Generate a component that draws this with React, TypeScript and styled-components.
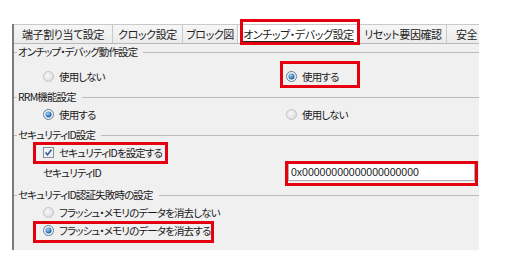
import styled, { createGlobalStyle } from "styled-components";

const GlobalStyle = createGlobalStyle`
  body {
    margin: 0;
    background: #ffffff;
    font-family: "Noto Sans CJK JP", "Noto Sans", sans-serif;
    font-feature-settings: "palt";
    font-size: 10.5px;
    letter-spacing: -0.85px;
    color: #1a1a1a;
  }
`;

const tabs = [
  { label: "端子割り当て設定", width: 99 },
  { label: "クロック設定", width: 70 },
  { label: "ブロック図", width: 55 },
  { label: "オンチップ・デバッグ設定", width: 122, active: true },
  { label: "リセット要因確認", width: 87 },
  { label: "安全", width: 32, cut: true },
];

const Radio = ({ checked }: { checked?: boolean }) => (
  <svg width="11" height="11" viewBox="0 0 11 11">
    <defs>
      <radialGradient id="rOff" cx="0.4" cy="0.4" r="0.7">
        <stop offset="0" stopColor="#f6f6f6" />
        <stop offset="1" stopColor="#dadada" />
      </radialGradient>
      <radialGradient id="rDot" cx="0.4" cy="0.35" r="0.7">
        <stop offset="0" stopColor="#a9d6f3" />
        <stop offset="0.6" stopColor="#3f84c2" />
        <stop offset="1" stopColor="#1c4f86" />
      </radialGradient>
    </defs>
    <circle
      cx="5.5"
      cy="5.5"
      r="5"
      fill={checked ? "#eef3f7" : "url(#rOff)"}
      stroke={checked ? "#5f7f99" : "#c2c2c2"}
    />
    {checked && <circle cx="5.5" cy="5.5" r="3" fill="url(#rDot)" />}
  </svg>
);

const Check = () => (
  <svg width="11" height="11" viewBox="0 0 11 11">
    <rect x="0.5" y="0.5" width="10" height="10" fill="#eef2f6" stroke="#8e8f8f" />
    <path d="M2.5 5.5 L4.5 7.8 L8.5 2.8" fill="none" stroke="#3a5a9c" strokeWidth="1.6" />
  </svg>
);

const App = () => {
  return (
    <>
      <GlobalStyle />
      <Window>
        <TabBar>
          {tabs.map((t) =>
            t.active ? (
              <Mark key={t.label} $x={2} $y={-5} $w={120} $h={26}>
                <Tab $w={t.width} $active>
                  <u>{t.label}</u>
                </Tab>
              </Mark>
            ) : (
              <Tab key={t.label} $w={t.width} $cut={t.cut}>
                {t.label}
              </Tab>
            ),
          )}
        </TabBar>
        <Body>
          <Group $top={2}>
            <GroupTitle>オンチップ・デバッグ動作設定</GroupTitle>
            <Row $top={9}>
              <Option>
                <Radio />
                使用しない
              </Option>
              <Mark $x={-6} $y={-6} $w={80} $h={27}>
                <Option>
                  <Radio checked />
                  使用する
                </Option>
              </Mark>
            </Row>
          </Group>

          <Group $top={6}>
            <GroupTitle>RRM機能設定</GroupTitle>
            <Row $top={2}>
              <Option>
                <Radio checked />
                使用する
              </Option>
              <Option>
                <Radio />
                使用しない
              </Option>
            </Row>
          </Group>

          <Group $top={6}>
            <GroupTitle>セキュリティID設定</GroupTitle>
            <Row $top={2}>
              <Mark $x={-10} $y={-1} $w={135} $h={22}>
                <Option>
                  <Check />
                  セキュリティIDを設定する
                </Option>
              </Mark>
            </Row>
            <FieldRow>
              <span>セキュリティID</span>
              <Mark $x={-3} $y={-2} $w={193} $h={25}>
                <IdInput readOnly value="0x00000000000000000000" />
              </Mark>
            </FieldRow>
          </Group>

          <Group $top={6}>
            <GroupTitle>セキュリティID認証失敗時の設定</GroupTitle>
            <Row $top={2}>
              <Option>
                <Radio />
                フラッシュ・メモリのデータを消去しない
              </Option>
            </Row>
            <Row>
              <Mark $x={-10} $y={0} $w={181} $h={22}>
                <Option>
                  <Radio checked />
                  フラッシュ・メモリのデータを消去する
                </Option>
              </Mark>
            </Row>
          </Group>
        </Body>
      </Window>
    </>
  );
};

const Window = styled.div`
  margin: 24px 0 0 12px;
  width: 465px;
  height: 226px;
  border-left: 2px solid #7c7c7c;
  display: flex;
  flex-direction: column;
`;

const TabBar = styled.div`
  display: flex;
  align-items: flex-end;
  height: 19px;
  border-bottom: 1px solid #b9b9b9;
  background: #ffffff;
`;

const Tab = styled.div<{ $w: number; $active?: boolean; $cut?: boolean }>`
  box-sizing: border-box;
  flex: none;
  width: ${(p) => p.$w}px;
  height: 19px;
  display: flex;
  align-items: center;
  justify-content: ${(p) => (p.$cut ? "flex-start" : "center")};
  padding-left: ${(p) => (p.$cut ? 9 : 0)}px;
  white-space: nowrap;
  font-size: 11px;
  letter-spacing: -0.4px;
  border: 1px solid #c9c9c9;
  border-left: none;
  border-bottom: none;
  border-right: ${(p) => (p.$cut ? "none" : "1px solid #c9c9c9")};
  background: ${(p) => (p.$active ? "#ffffff" : "linear-gradient(#f6f6f6, #ebebeb)")};
  color: #222;

  u {
    text-decoration-thickness: 1px;
    text-underline-offset: 2px;
  }
`;

const Mark = styled.span<{ $x: number; $y: number; $w: number; $h: number }>`
  position: relative;
  display: inline-flex;
  flex: none;

  &::after {
    content: "";
    position: absolute;
    left: ${(p) => p.$x}px;
    top: ${(p) => p.$y}px;
    width: ${(p) => p.$w}px;
    height: ${(p) => p.$h}px;
    box-sizing: border-box;
    border: 3px solid #e5000f;
    pointer-events: none;
  }
`;

const Body = styled.div`
  flex: 1;
  background: #f0f0f0;
  display: flex;
  flex-direction: column;
`;

const Group = styled.div<{ $top: number }>`
  margin-top: ${(p) => p.$top}px;
`;

const GroupTitle = styled.div`
  display: flex;
  align-items: center;
  height: 12px;
  line-height: 12px;
  white-space: nowrap;

  &::before {
    content: "";
    width: 3px;
    border-top: 1px solid #bcbcbc;
    margin-right: 1px;
  }

  &::after {
    content: "";
    flex: 1;
    border-top: 1px solid #bcbcbc;
    margin-left: 6px;
  }
`;

const Row = styled.div<{ $top?: number }>`
  display: grid;
  grid-template-columns: 243px 1fr;
  align-items: center;
  height: 18px;
  padding-left: 29px;
  margin-top: ${(p) => p.$top ?? 0}px;
`;

const Option = styled.label`
  display: inline-flex;
  align-items: center;
  gap: 5px;
  height: 18px;
  white-space: nowrap;
`;

const FieldRow = styled.div`
  display: grid;
  grid-template-columns: 245px 1fr;
  align-items: center;
  height: 22px;
  padding-left: 29px;
`;

const IdInput = styled.input`
  box-sizing: border-box;
  width: 187px;
  height: 18px;
  margin: 0;
  padding: 0 2px;
  border: 1px solid #abadb3;
  background: #ffffff;
  font-family: "Liberation Sans", sans-serif;
  font-size: 10.5px;
  letter-spacing: 0;
  color: #1a1a1a;
  outline: none;
`;

export default App;
